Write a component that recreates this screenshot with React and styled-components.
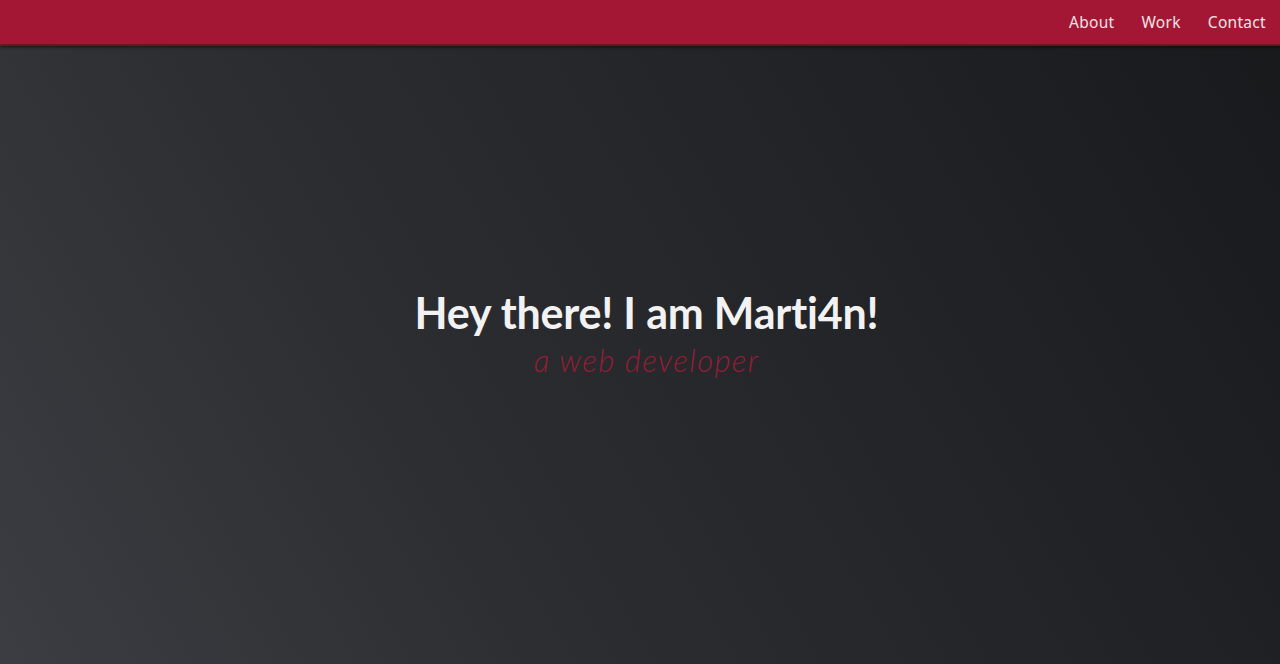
import styled, { createGlobalStyle } from "styled-components";

const Global = createGlobalStyle`
  html, body {
    margin: 0;
    padding: 0;
    height: 100%;
  }
  body {
    background: #222326;
  }
`;

const Page = styled.div`
  display: flex;
  flex-direction: column;
  height: 100vh;
  background: linear-gradient(
    60deg,
    #3c3d42 0%,
    #2c2d31 35%,
    #232427 65%,
    #18191b 100%
  );
  overflow: hidden;
`;

const Header = styled.header`
  display: flex;
  justify-content: flex-end;
  align-items: center;
  height: 44px;
  background: #a31734;
  border-bottom: 2px solid #6e1224;
  box-shadow: 0 1px 3px rgba(0, 0, 0, 0.6);
  padding-right: 14px;
  gap: 27px;
`;

const NavLink = styled.a`
  font-family: "Noto Sans", "Open Sans", sans-serif;
  font-size: 15.5px;
  color: #f3e3e6;
  text-decoration: none;
  letter-spacing: 0.3px;
`;

const Hero = styled.main`
  flex: 1;
  display: flex;
  flex-direction: column;
  align-items: center;
  justify-content: center;
  padding-left: 13px;
  padding-bottom: 42px;
`;

const Title = styled.h1`
  margin: 0;
  font-family: "Lato", "Open Sans", sans-serif;
  font-weight: 700;
  font-size: 43px;
  line-height: 48px;
  color: #f2f2f2;
  letter-spacing: -0.2px;
`;

const Subtitle = styled.p`
  margin: 3px 0 0;
  font-family: "Lato", "Open Sans", sans-serif;
  font-weight: 300;
  font-style: italic;
  font-size: 31px;
  line-height: 40px;
  color: #961d36;
  letter-spacing: 1.4px;
`;

const App = () => {
  return (
    <Page>
      <Global />
      <Header>
        <NavLink href="#about">About</NavLink>
        <NavLink href="#work">Work</NavLink>
        <NavLink href="#contact">Contact</NavLink>
      </Header>
      <Hero>
        <Title>Hey there! I am Marti4n!</Title>
        <Subtitle>a web developer</Subtitle>
      </Hero>
    </Page>
  );
};

export default App;
